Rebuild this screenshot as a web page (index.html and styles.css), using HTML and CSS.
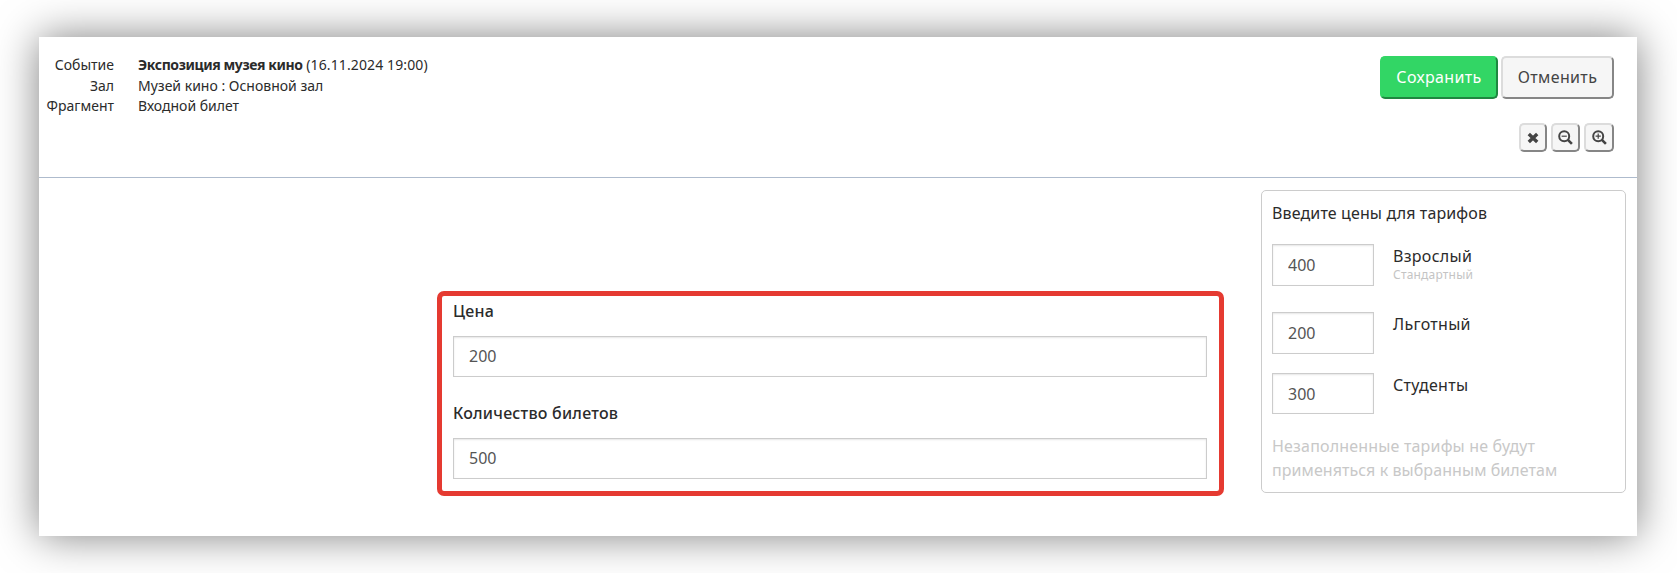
FILE: index.html
```html
<!DOCTYPE html>
<html lang="ru">
<head>
    <meta charset="UTF-8">
    <meta name="viewport" content="width=device-width, initial-scale=1.0">
    <title>Входной билет</title>
    <link rel="stylesheet" href="styles.css">
</head>
<body>
    <div class="page">
        <header class="header">
            <dl class="info">
                <dt>Событие</dt>
                <dd><b>Экспозиция музея кино</b> <span>(16.11.2024 19:00)</span></dd>
                <dt>Зал</dt>
                <dd>Музей кино : Основной зал</dd>
                <dt>Фрагмент</dt>
                <dd>Входной билет</dd>
            </dl>
            <div class="actions">
                <div class="buttons">
                    <button class="btn save">Сохранить</button>
                    <button class="btn">Отменить</button>
                </div>
                <div class="tools">
                    <button class="tool close" aria-label="Закрыть">
                        <svg width="12" height="12" viewBox="0 0 12 12"><path d="M1.8 2l8.4 8M10.2 2l-8.4 8" stroke-width="3.4"/></svg>
                    </button>
                    <button class="tool" aria-label="Уменьшить">
                        <svg width="15" height="15" viewBox="0 0 15 15"><circle cx="6.2" cy="6.2" r="5" stroke-width="2"/><path d="M9.9 9.9l4 4" stroke-width="2.6"/><path d="M3.6 6.2h5.2" stroke-width="1.2"/></svg>
                    </button>
                    <button class="tool zoom-in" aria-label="Увеличить">
                        <svg width="15" height="15" viewBox="0 0 15 15"><circle cx="6.2" cy="6.2" r="5" stroke-width="2"/><path d="M9.9 9.9l4 4" stroke-width="2.6"/><path d="M3.6 6.2h5.2M6.2 3.6v5.2" stroke-width="1.2"/></svg>
                    </button>
                </div>
            </div>
        </header>
        <main class="content">
            <form class="form">
                <label for="price">Цена</label>
                <input type="text" id="price" value="200">
                <label for="count">Количество билетов</label>
                <input type="text" id="count" value="500">
            </form>
            <aside class="tariffs">
                <p class="title">Введите цены для тарифов</p>
                <div class="tariff first">
                    <input type="text" value="400">
                    <div class="name">Взрослый<small>Стандартный</small></div>
                </div>
                <div class="tariff second">
                    <input type="text" value="200">
                    <div class="name">Льготный</div>
                </div>
                <div class="tariff">
                    <input type="text" value="300">
                    <div class="name">Студенты</div>
                </div>
                <p class="note">Незаполненные тарифы не будут<br><span>применяться к выбранным билетам</span></p>
            </aside>
        </main>
    </div>
</body>
</html>
```
FILE: styles.css
```css
* {
    box-sizing: border-box;
}
body {
    margin: 0;
    padding: 37px 40px 37px 39px;
    background-color: #ffffff;
    color: #2b2b2b;
    font-family: "Noto Sans", "Open Sans", sans-serif;
    font-size: 16px;
    line-height: 24px;
}
.page {
    height: 499px;
    background: #ffffff;
    box-shadow: 0 0 40px rgba(0, 0, 0, 0.5);
}
.header {
    display: flex;
    justify-content: space-between;
    height: 141px;
    padding: 19px 23px 0 7px;
    border-bottom: 1px solid #aebbcd;
}
.info {
    display: grid;
    grid-template-columns: 68px auto;
    grid-template-rows: 21px 20px 20px;
    column-gap: 24px;
    align-content: start;
    margin: -1px 0 0;
    font-size: 14px;
    line-height: 20px;
    white-space: nowrap;
}
.info dt {
    text-align: right;
}
.info dd {
    margin: 0;
}
.info b {
    letter-spacing: -0.4px;
}
.info span {
    letter-spacing: 0.12px;
}
.buttons {
    display: flex;
    gap: 3px;
}
button {
    padding: 0;
    border: 2px solid;
    border-color: #dcdcdc #868686 #868686 #dcdcdc;
    border-radius: 5px;
    background-color: #f6f6f6;
    color: #444444;
    font-family: inherit;
}
.btn {
    width: 113px;
    height: 43px;
    padding-bottom: 2px;
    font-size: 16px;
    letter-spacing: 0.35px;
}
.save {
    width: 118px;
    background-color: #32d665;
    border-color: #32d665 #1f8740 #1f8740 #32d665;
    color: #ffffff;
}
.tools {
    display: flex;
    justify-content: flex-end;
    gap: 4px;
    margin-top: 24px;
}
.tool {
    display: flex;
    align-items: center;
    justify-content: center;
    width: 29px;
    height: 29px;
}
.close {
    width: 28px;
}
.zoom-in {
    width: 30px;
}
.tool svg {
    fill: none;
    stroke: #444444;
}
.content {
    display: flex;
    align-items: flex-start;
    justify-content: flex-end;
    gap: 37px;
    padding: 12px 11px 0 0;
}
input {
    display: block;
    width: 100%;
    height: 41px;
    padding: 0 15px;
    border: 1px solid #cccccc;
    box-shadow: inset 0 1px 2px rgba(0, 0, 0, 0.1);
    background: #ffffff;
    color: #555555;
    font-family: inherit;
    font-size: 16px;
}
.form {
    width: 787px;
    height: 205px;
    margin-top: 101px;
    padding: 3px 12px 0 11px;
    border: 5px solid #e53a31;
    border-radius: 7px;
}
.form label {
    display: block;
    margin-bottom: 13px;
    font-weight: 500;
    letter-spacing: 0.22px;
}
.form input {
    margin-bottom: 24px;
    padding-bottom: 2px;
}
.tariffs {
    width: 365px;
    height: 303px;
    padding: 10px;
    border: 1px solid #cccccc;
    border-radius: 5px;
}
p {
    margin: 0;
}
.title {
    margin-bottom: 19px;
    letter-spacing: 0.13px;
}
.tariff {
    display: flex;
    gap: 19px;
    margin-bottom: 20px;
}
.tariff input {
    width: 102px;
}
.name {
    letter-spacing: 0.3px;
}
.first {
    margin-bottom: 26px;
}
.first input, .second input {
    height: 42px;
}
.second {
    margin-bottom: 19px;
}
.name small {
    display: block;
    font-size: 12px;
    line-height: 14px;
    letter-spacing: 0.2px;
    color: #c4c4c4;
}
.note {
    color: #c8c8c8;
    letter-spacing: 0.18px;
    white-space: nowrap;
}
.note span {
    letter-spacing: 0.07px;
}
```
